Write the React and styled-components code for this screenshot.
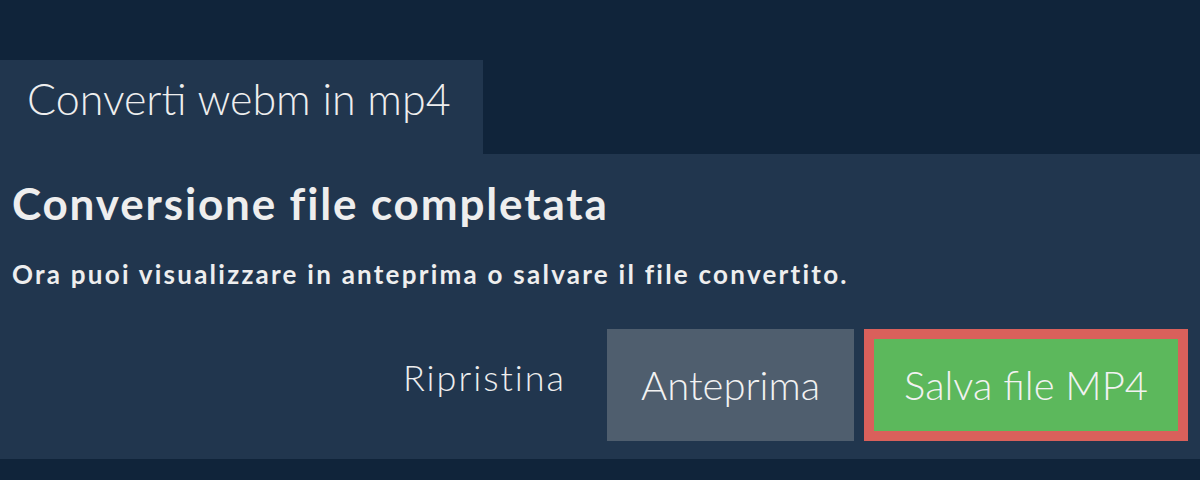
import React from "react";
import styled, { createGlobalStyle } from "styled-components";

const Global = createGlobalStyle`
  html, body {
    margin: 0;
    padding: 0;
    background: #10243a;
    font-family: Lato, "Open Sans", sans-serif;
    color: #eeeeee;
  }
`;

const Page = styled.div`
  width: 1200px;
  height: 480px;
  padding-top: 60px;
  box-sizing: border-box;
  background: #10243a;
`;

const Tab = styled.div`
  width: 483px;
  height: 94px;
  box-sizing: border-box;
  padding: 13px 0 0 27px;
  background: #21364e;
  font-size: 43px;
  line-height: 1.2;
  font-weight: 300;
  color: #eeeeee;
`;

const Panel = styled.div`
  height: 305px;
  box-sizing: border-box;
  background: #21364e;
  padding: 24px 12px 0 12px;
`;

const Heading = styled.h2`
  margin: 0;
  font-size: 44px;
  font-weight: 700;
  line-height: 50px;
  letter-spacing: 1.85px;
  color: #eeeeee;
`;

const Sub = styled.p`
  margin: 31px 0 0 0;
  font-size: 26px;
  font-weight: 700;
  line-height: 30px;
  letter-spacing: 2.25px;
  color: #eeeeee;
`;

const Actions = styled.div`
  display: flex;
  justify-content: flex-end;
  align-items: center;
  gap: 10px;
  margin-top: 40px;
`;

const TextButton = styled.button`
  background: none;
  border: none;
  padding: 0 31px 16px 35px;
  font-family: inherit;
  font-size: 36px;
  font-weight: 300;
  letter-spacing: 2px;
  color: #eeeeee;
  cursor: pointer;
`;

const Button = styled.button`
  height: 112px;
  box-sizing: border-box;
  padding: 0 ${(p) => p.$pad}px;
  border: ${(p) => (p.$outlined ? "10px solid #d9605b" : "none")};
  background: ${(p) => p.$bg};
  font-family: inherit;
  font-size: 40px;
  font-weight: 300;
  color: #f2f2f2;
  cursor: pointer;
`;

export default function App() {
  return (
    <>
      <Global />
      <Page>
        <Tab>Converti webm in mp4</Tab>
        <Panel>
          <Heading>Conversione file completata</Heading>
          <Sub>Ora puoi visualizzare in anteprima o salvare il file convertito.</Sub>
          <Actions>
            <TextButton>Ripristina</TextButton>
            <Button $bg="#4f5e6e" $pad={34}>Anteprima</Button>
            <Button $bg="#5cb85c" $pad={30} $outlined>Salva file MP4</Button>
          </Actions>
        </Panel>
      </Page>
    </>
  );
}
